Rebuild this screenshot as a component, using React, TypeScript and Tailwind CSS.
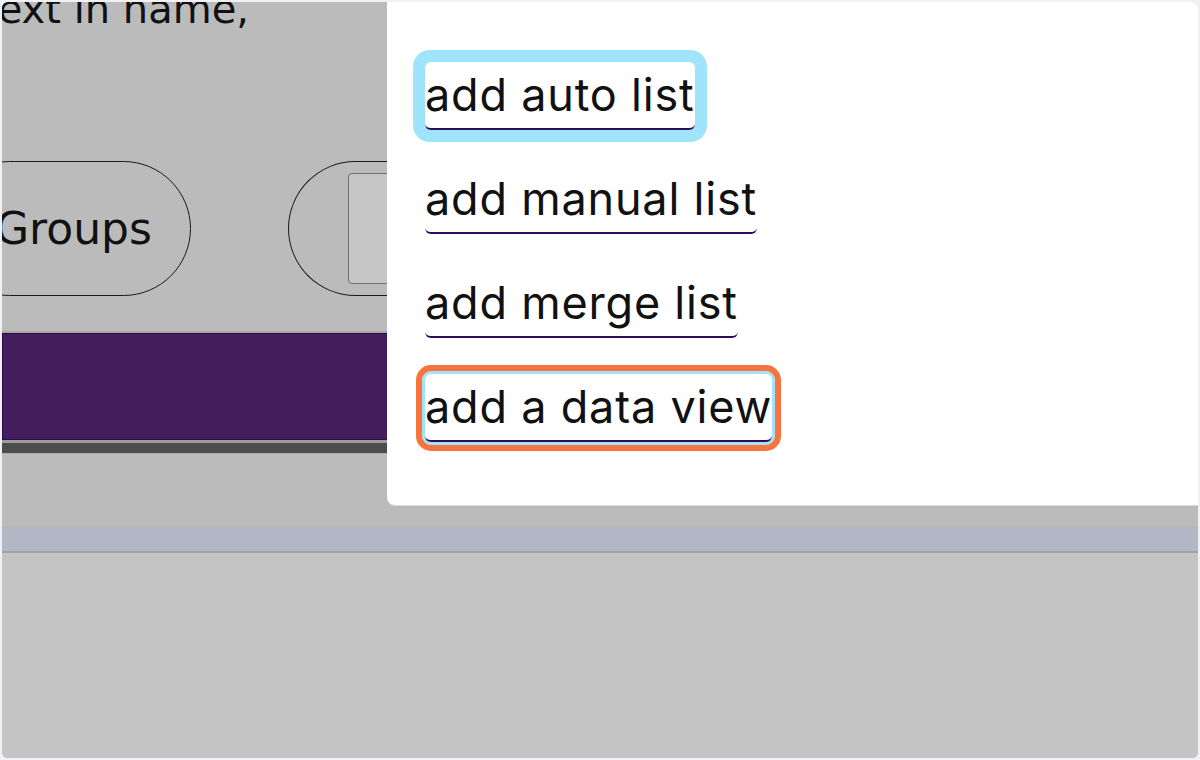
import React from 'react';

const menuItems = [
  { label: 'add auto list', state: 'focus' },
  { label: 'add manual list', state: 'none' },
  { label: 'add merge list', state: 'none' },
  { label: 'add a data view', state: 'highlight' },
];

function MenuLink({ label, state }: { label: string; state: string }) {
  let extra = '';
  if (state === 'focus') extra = 'shadow-[0_0_0_12px_#a0e4fc]';
  if (state === 'highlight')
    extra = 'shadow-[0_0_0_3px_#a0e4fc] outline-[6px] outline-solid outline-offset-[3px] outline-[#f8743f]';

  return (
    <a
      href="#"
      className={
        'inline-block rounded-[6px] bg-white pt-[6px] pb-[7px] border-b-2 border-[#2d0b5a] text-[45px] tracking-[0.8px] leading-[1.18] text-[#111] whitespace-nowrap ' +
        extra
      }
    >
      {label}
    </a>
  );
}

export default function App() {
  return (
    <div className="w-[1200px] h-[760px] bg-[#f0f0f5] p-[2px]">
      <div className="relative h-full w-full overflow-hidden rounded-[6px] bg-[#bbbbbb] flex flex-col font-['DejaVu_Sans',sans-serif]">
        <div className="h-[40px] -mt-[13px] -ml-[20px] text-[40px] leading-[40px] text-[#111] whitespace-nowrap">
          text in name,
        </div>

        <div className="mt-[132px] h-[135px] flex items-stretch gap-[97px] shrink-0">
          <div className="-ml-[60px] flex items-center rounded-full border-[1.5px] border-[#1a1a1a] pl-[52px] pr-[38px] text-[44px] text-[#111]">
            Groups
          </div>
          <div className="flex-1 rounded-l-full border-[1.5px] border-r-0 border-[#1a1a1a] pl-[59px] py-[11px]">
            <div className="h-full rounded-[4px] border-[1.5px] border-[#707070] bg-[#c6c6c6]" />
          </div>
        </div>

        <div className="mt-[35px] h-[2px] bg-[#a8a8a8] shrink-0" />
        <div className="h-[107px] bg-[#441d5c] border border-[#2b0b4b] shrink-0" />
        <div className="h-[3px] bg-[#9c9c9c] shrink-0" />
        <div className="h-[10px] bg-[#4d4d4d] shrink-0" />
        <div className="h-[1px] bg-[#a9a9a9] shrink-0" />
        <div className="h-[73px] shrink-0" />
        <div className="h-[24px] bg-[#b1b7c4] shrink-0" />
        <div className="h-[2px] bg-[#a2a2a2] shrink-0" />
        <div className="flex-1 bg-[#c4c4c4]" />

        <div className="absolute top-0 left-[385px] right-0 h-[503px] bg-white rounded-bl-[8px] shadow-[0_1px_0_#d9d9d9] pt-[60px] pl-[38px] flex flex-col items-start gap-[36px] font-['Inter',sans-serif]">
          {menuItems.map((item) => (
            <MenuLink key={item.label} label={item.label} state={item.state} />
          ))}
        </div>
      </div>
    </div>
  );
}
